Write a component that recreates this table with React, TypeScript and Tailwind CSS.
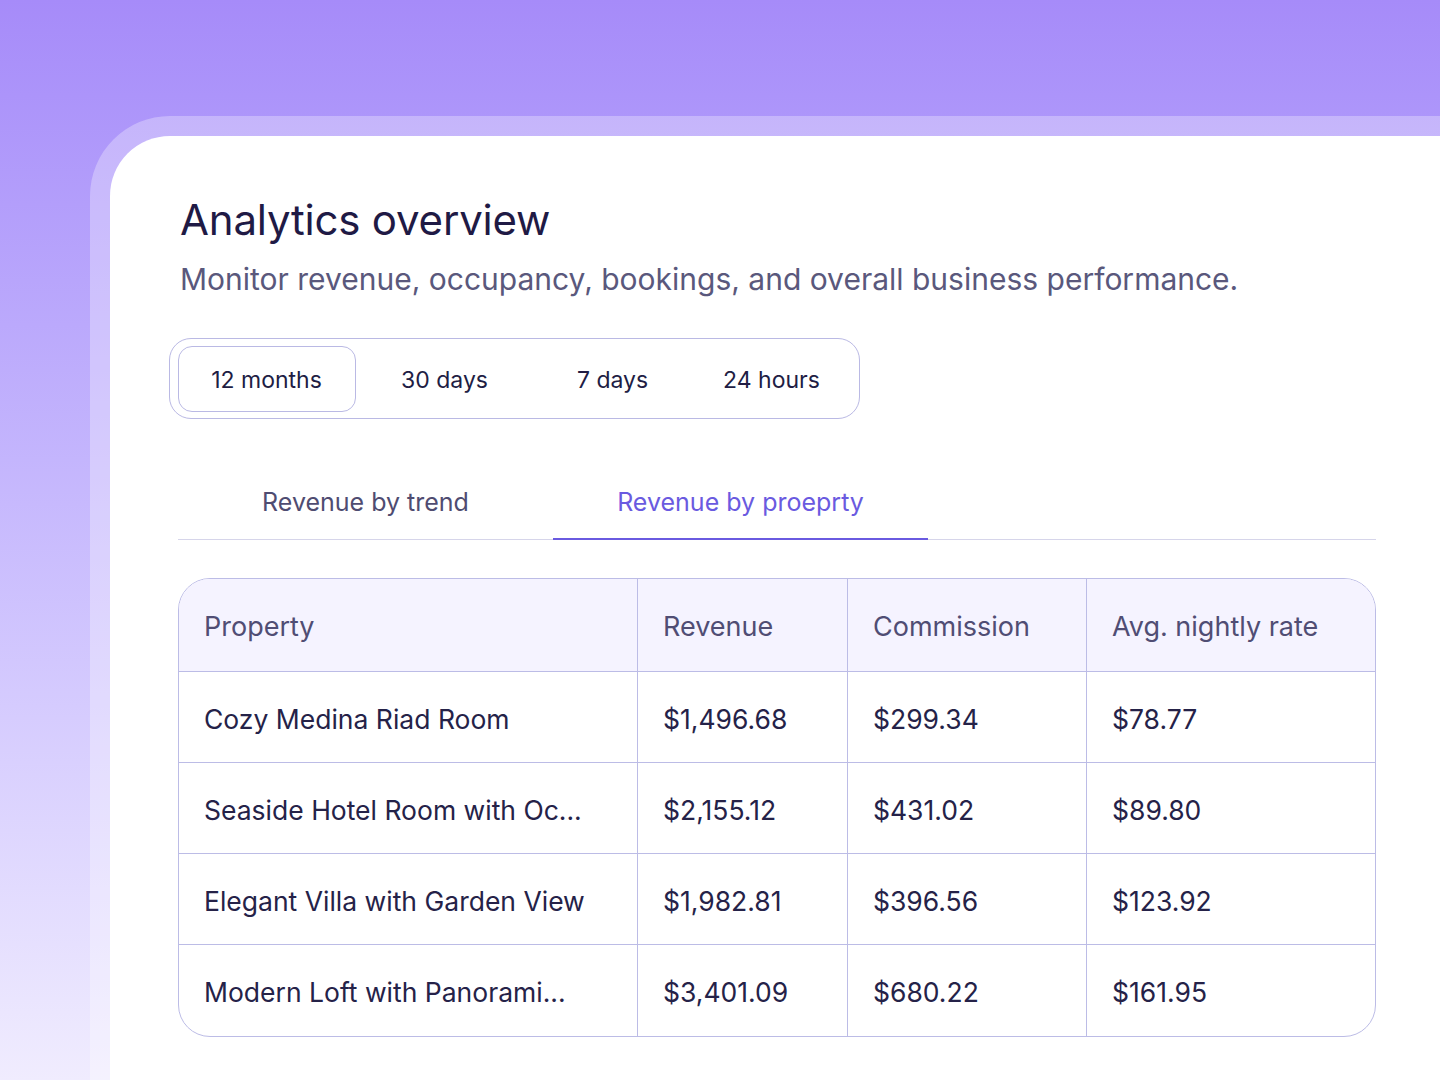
import React from "react";

const rows = [
  ["Cozy Medina Riad Room", "$1,496.68", "$299.34", "$78.77"],
  ["Seaside Hotel Room with Oc...", "$2,155.12", "$431.02", "$89.80"],
  ["Elegant Villa with Garden View", "$1,982.81", "$396.56", "$123.92"],
  ["Modern Loft with Panorami...", "$3,401.09", "$680.22", "$161.95"],
];

const headers = ["Property", "Revenue", "Commission", "Avg. nightly rate"];

export default function App() {
  return (
    <div
      className="w-full h-[1080px] overflow-hidden bg-gradient-to-b from-[#a68bf9] to-[#f0ecfe] pt-[116px] pl-[90px]"
      style={{ fontFamily: "Inter, 'Noto Sans', sans-serif" }}
    >
      <div className="h-full rounded-tl-[80px] bg-white/30 pt-5 pl-5">
        <div className="h-full rounded-tl-[60px] bg-white pl-[70px] pr-[64px] pt-[59px]">
          <h1 className="text-[42px] leading-[50px] font-normal text-[#1f1a45] tracking-[-0.2px]">
            Analytics overview
          </h1>
          <p className="mt-[16px] text-[30px] leading-[36px] text-[#5a587c]">
            Monitor revenue, occupancy, bookings, and overall business performance.
          </p>

          <div className="mt-[41px] -ml-[11px] inline-flex border-[1.5px] border-[#bab9e4] rounded-[22px] px-[7.5px] py-[6.5px]">
            <div className="w-[178px] h-[66px] pt-[4px] flex items-center justify-center border-[1.5px] border-[#bab9e4] rounded-[14px] text-[23px] text-[#211d44]">
              12 months
            </div>
            <div className="w-[178px] h-[66px] pt-[4px] flex items-center justify-center text-[23px] text-[#211d44]">
              30 days
            </div>
            <div className="w-[158px] h-[66px] pt-[4px] flex items-center justify-center text-[23px] text-[#211d44]">
              7 days
            </div>
            <div className="w-[160px] h-[66px] pt-[4px] flex items-center justify-center text-[23px] text-[#211d44]">
              24 hours
            </div>
          </div>

          <div className="mt-[49px] -ml-[2px] flex border-b border-[#d6d5ea]">
            <div className="w-[375px] h-[72px] -mb-px flex items-center justify-center border-b-2 border-transparent text-[25px] text-[#4f4c71]">
              Revenue by trend
            </div>
            <div className="w-[375px] h-[72px] -mb-px flex items-center justify-center border-b-2 border-[#6a5ae0] text-[25px] text-[#6a5ae0]">
              Revenue by proeprty
            </div>
          </div>

          <div className="mt-[38px] -ml-[2px] border-[1.5px] border-[#bcbce6] rounded-[32px] overflow-hidden">
            <div className="grid grid-cols-[459px_210px_239px_1fr]">
              {headers.map((h, i) => (
                <div
                  key={h}
                  className={
                    "h-[93px] pt-[5px] flex items-center pl-[25px] bg-[#f5f3ff] border-b-[1.5px] border-[#bcbce6] text-[27px] text-[#504d74] " +
                    (i < 3 ? "border-r-[1.5px]" : "")
                  }
                >
                  {h}
                </div>
              ))}
              {rows.map((r, ri) =>
                r.map((c, ci) => (
                  <div
                    key={ri + "-" + ci}
                    className={
                      "pt-[5px] flex items-center pl-[25px] border-[#bcbce6] text-[26.5px] text-[#252248] whitespace-nowrap " +
                      (ri < 3 ? "h-[91px] border-b-[1.5px] " : "h-[91px] ") +
                      (ci < 3 ? "border-r-[1.5px]" : "")
                    }
                  >
                    {c}
                  </div>
                ))
              )}
            </div>
          </div>
        </div>
      </div>
    </div>
  );
}
